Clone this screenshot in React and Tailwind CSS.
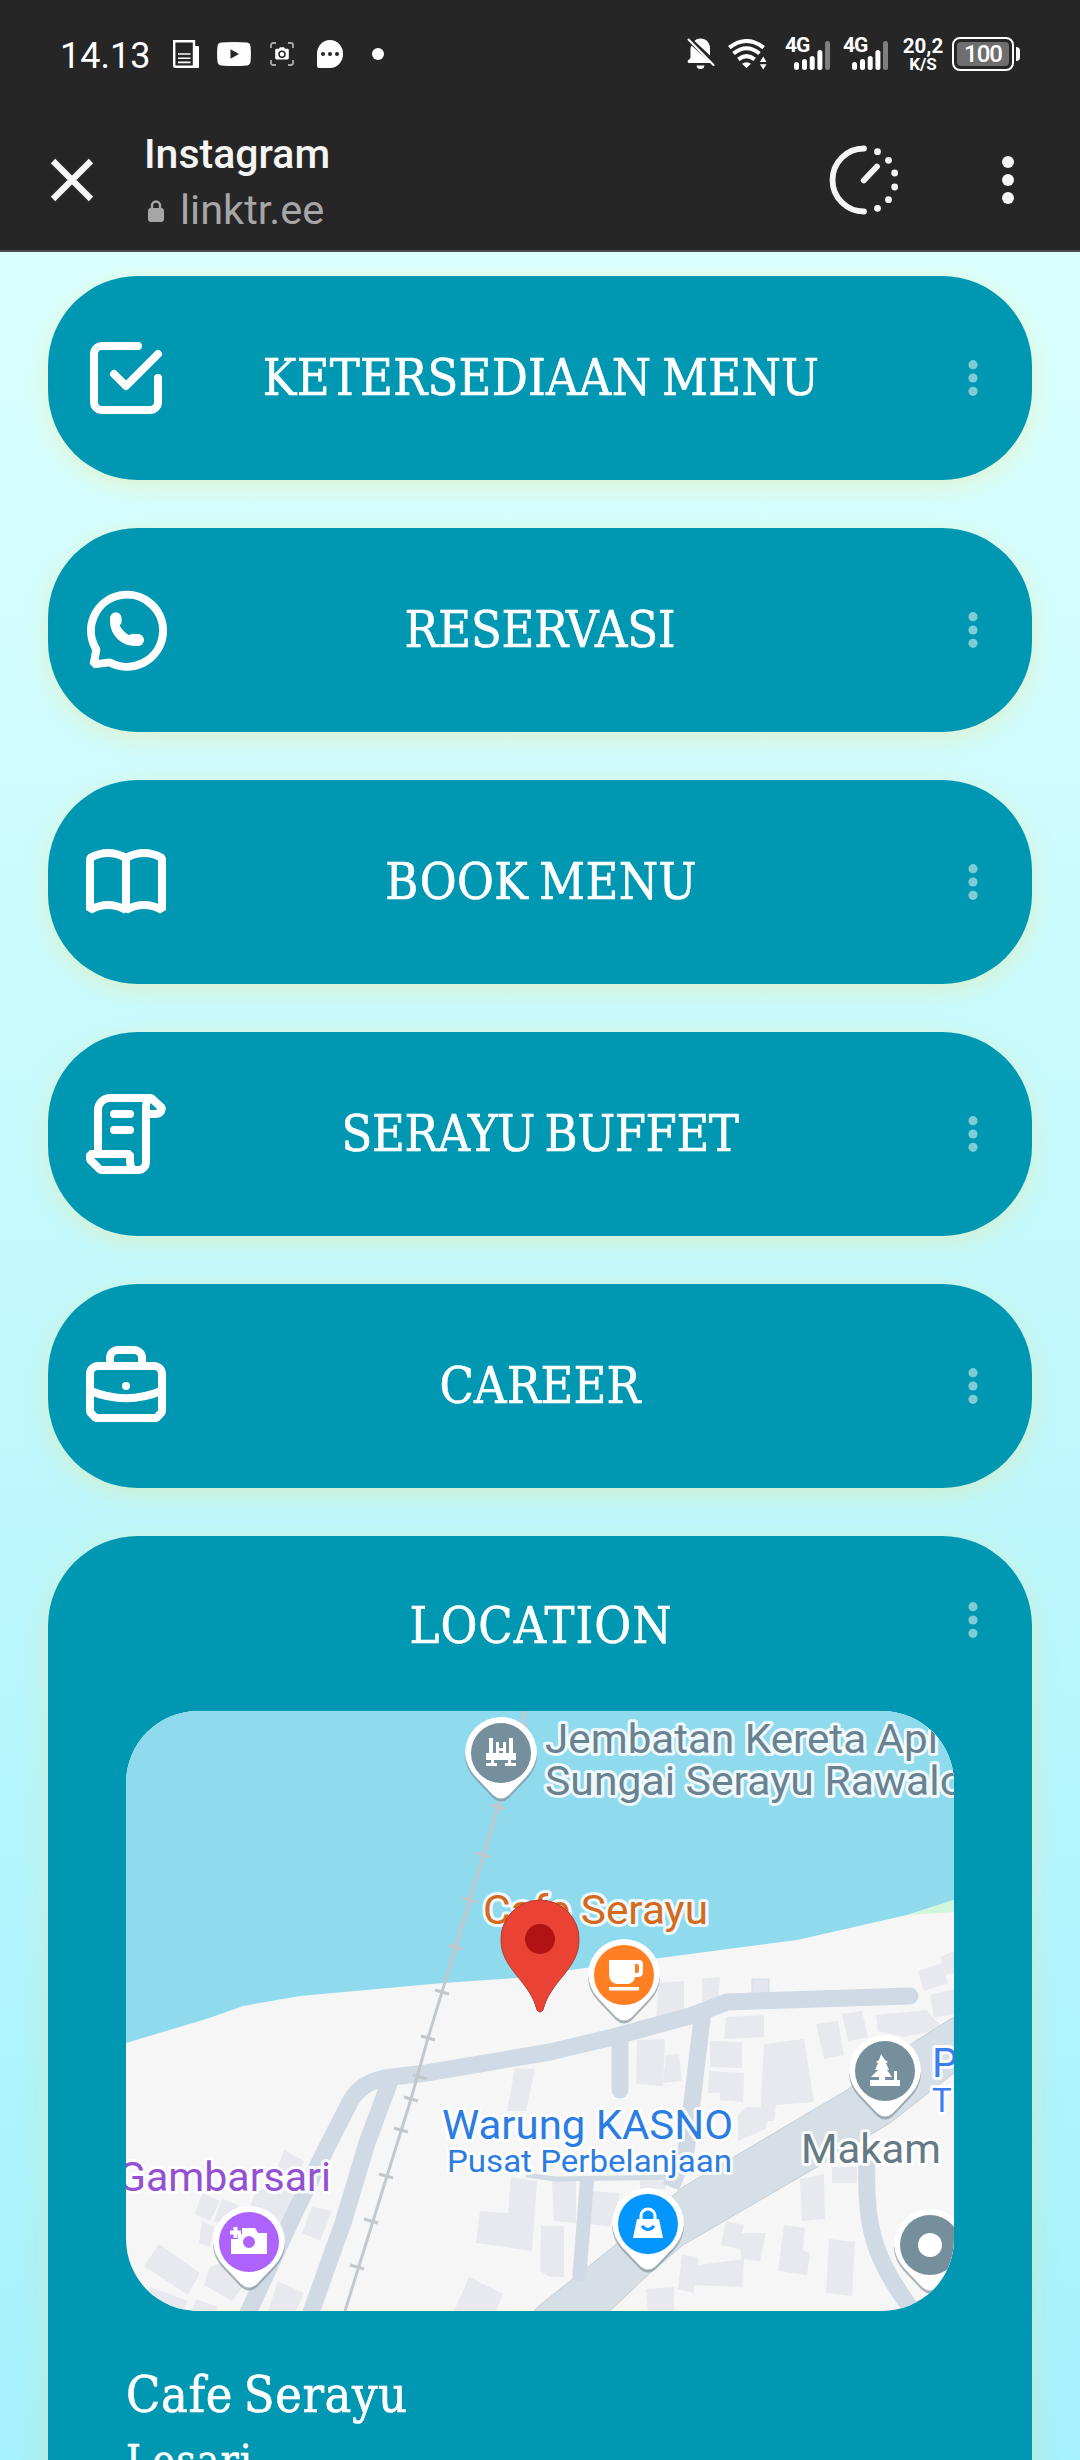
import React from "react";

const slab = "font-['DejaVu_Serif_Condensed','DejaVu_Serif',serif] [font-stretch:condensed] [-webkit-text-stroke:0.6px_#fff] [word-spacing:-4px]";

/* ---------- status bar ---------- */

function Bars() {
  return (
    <svg width="36" height="29" viewBox="0 0 36 29" className="absolute left-[9px] top-[3px]">
      <g fill="#fff">
        <rect x="0" y="21" width="5" height="8" rx="2.5" />
        <rect x="8" y="18" width="5" height="11" rx="2.5" />
        <rect x="15.7" y="15" width="5" height="14" rx="2.5" />
        <rect x="23.4" y="9" width="5" height="20" rx="2.5" />
      </g>
      <rect x="31" y="0" width="5" height="29" rx="2.5" fill="#7f7f7f" />
    </svg>
  );
}

function Signal() {
  return (
    <div className="relative h-[33px] w-[46px] shrink-0">
      <span className="absolute left-0 top-[-1px] text-[21px] font-bold leading-[17px] tracking-[-1px]">4G</span>
      <Bars />
    </div>
  );
}

function StatusBar() {
  return (
    <div className="flex h-[108px] items-center pl-[60px] pr-[60px] text-white">
      <span className="w-[113px] pt-[3px] text-[36px] leading-none">14.13</span>
      <svg width="26" height="28" viewBox="0 0 26 28">
        <path d="M1.2 1.2H21V26.8H2.2a1 1 0 0 1-1-1Z" fill="none" stroke="#fff" strokeWidth="2.4" />
        <path d="M21 6h4a1 1 0 0 1 1 1v20a1 1 0 0 1-1 1h-4Z" fill="#fff" />
        <path d="M5 14h12.500M5 18.200h12.500M5 22.400h12.500" stroke="#fff" strokeWidth="1.6" />
      </svg>
      <svg width="34" height="24" viewBox="0 0 34 24" className="ml-[18px]">
        <path d="M4 .6Q17-.6 30 .6 33.400 1 33.600 5 34.200 12 33.600 19 33.400 23 30 23.400 17 24.600 4 23.400 .6 23 .4 19-.2 12 .4 5 .6 1 4 .6Z" fill="#fff" />
        <path d="M13.500 7.300 22 12l-8.500 4.700Z" fill="#262626" />
      </svg>
      <svg width="24" height="24" viewBox="0 0 24 24" className="ml-[19px]">
        <path d="M1 6V3a2 2 0 0 1 2-2h3M18 1h3a2 2 0 0 1 2 2v3M23 18v3a2 2 0 0 1-2 2h-3M6 23H3a2 2 0 0 1-2-2v-3" fill="none" stroke="#a8a8a8" strokeWidth="1.8" />
        <path d="M6.500 6.800H9l1-1.600h4l1 1.600h2.500a1.300 1.300 0 0 1 1.300 1.300v8a1.300 1.300 0 0 1-1.300 1.300h-11a1.300 1.300 0 0 1-1.300-1.300v-8a1.300 1.300 0 0 1 1.300-1.300Z" fill="#fff" />
        <circle cx="12" cy="12.200" r="3" fill="#fff" stroke="#262626" strokeWidth="1.500" />
      </svg>
      <svg width="26" height="28" viewBox="0 0 26 28" className="ml-[23px]">
        <path d="M13 0a13 14 0 0 1 0 28H2a2 2 0 0 1-2-2V14A13 14 0 0 1 13 0Z" fill="#fff" />
        <g fill="#262626">
          <circle cx="6" cy="14" r="2" />
          <circle cx="13" cy="14" r="2" />
          <circle cx="20" cy="14" r="2" />
        </g>
      </svg>
      <span className="ml-[29px] h-3 w-3 rounded-full bg-white" />
      <div className="ml-auto flex items-center">
        <svg width="28" height="32" viewBox="0 0 28 32">
          <path d="M13.500.5c5.500 0 9.500 4 9.500 10v7L7.500 3C9 1.300 11 .5 13.500.5ZM4.500 7.500 24 25H2a1.500 1.500 0 0 1-1-2.500L3.500 20V11q0-2 1-3.500ZM9.500 27.500h8q-.5 3.500-4 3.500t-4-3.500Z" fill="#fff" />
          <path d="M1.500 1.500 26.500 27" stroke="#fff" strokeWidth="2" strokeLinecap="round" />
        </svg>
        <svg width="39" height="31" viewBox="0 0 39 31" className="ml-[13px]">
          <g fill="none" stroke="#fff" strokeWidth="4">
            <path d="M1.300 8.700Q18.500-4.700 35.700 8.700" />
            <path d="M5.500 14.500Q18.500 4 31.500 14.500" />
            <path d="M10.300 20.300Q18.500 14 26.700 20.300" />
          </g>
          <path d="M14 24.800Q18.500 21.500 23 24.800L18.500 29Z" fill="#fff" />
          <path d="M35.200 17.500 38.500 23h-6.600ZM35.200 30.500l3.300-5.200h-6.600Z" fill="#fff" />
        </svg>
        <div className="ml-[18px] flex gap-3">
          <Signal />
          <Signal />
        </div>
        <div className="ml-[14px] flex h-[34px] w-[40px] flex-col items-center font-bold">
          <span className="text-[20.500px] leading-[18px]">20,2</span>
          <span className="text-[17px] leading-[18px]">K/S</span>
        </div>
        <div className="ml-[9px] flex h-[34px] w-[62px] rounded-[8px] border-[2.500px] border-white p-[3px]">
          <div className="flex flex-1 items-center justify-center rounded-[4px] bg-[#6e6e6e] text-[24px] font-medium leading-none tracking-[-1px]">
            100
          </div>
        </div>
        <span className="ml-[2px] h-[14px] w-[4px] rounded-r-[4px] bg-white" />
      </div>
    </div>
  );
}

/* ---------- browser bar ---------- */

const loadingDots = [
  [48.5, 11.7],
  [59.5, 20.3],
  [65.7, 33],
  [65.7, 47],
  [59.5, 59.7],
  [48.5, 68.3],
];

function BrowserBar() {
  return (
    <div className="flex h-[144px] items-center border-b-2 border-[#474c4c] pl-[50px] pt-[2px]">
      <svg width="44" height="44" viewBox="0 0 44 44">
        <path d="M3 3 41 41M41 3 3 41" stroke="#f5f5f5" strokeWidth="6.200" />
      </svg>
      <div className="ml-[50px] flex flex-col pt-[4px]">
        <span className="text-[41px] font-medium leading-[56px] text-[#f5f5f5]">Instagram</span>
        <div className="flex items-center text-[#a6a6a6]">
          <svg width="16" height="22" viewBox="0 0 16 22" className="mt-[1px] ml-[4px]">
            <rect x="0" y="8" width="16" height="14" rx="3" fill="#a6a6a6" />
            <path d="M4 10V5.500a4 4 0 0 1 8 0V10" fill="none" stroke="#a6a6a6" strokeWidth="2.400" />
          </svg>
          <span className="ml-[16px] text-[41.500px] leading-[56px]">linktr.ee</span>
        </div>
      </div>
      <svg width="80" height="80" viewBox="0 0 80 80" className="ml-auto mr-[93px]">
        <g fill="none" stroke="#f5f5f5" strokeWidth="5.800" strokeLinecap="round">
          <path d="M35 8.500a31.500 31.500 0 0 0 0 63" />
          <path d="M34.700 40.500 48 26.500" />
        </g>
        {loadingDots.map(([x, y]) => (
          <circle key={x + "-" + y} cx={x} cy={y} r="3.400" fill="#f5f5f5" />
        ))}
      </svg>
      <svg width="12" height="50" viewBox="0 0 12 50" className="mr-[66px]" fill="#f5f5f5">
        <circle cx="6" cy="7" r="6" />
        <circle cx="6" cy="25" r="6" />
        <circle cx="6" cy="43" r="6" />
      </svg>
    </div>
  );
}

/* ---------- link icons ---------- */

function Icon({ children }) {
  return (
    <svg width="96" height="96" viewBox="0 0 24 24" fill="none" stroke="#fff" strokeWidth="2">
      {children}
    </svg>
  );
}

const CheckIcon = () => (
  <Icon>
    <g strokeLinecap="round" strokeLinejoin="round">
      <path d="M15 4H6a2 2 0 0 0-2 2v12a2 2 0 0 0 2 2h12a2 2 0 0 0 2-2v-6" />
      <path d="m9 11 3 3 8-8" />
    </g>
  </Icon>
);

const ChatIcon = () => (
  <Icon>
    <path d="M4.600 16.900A9 9 0 1 1 8 20.100L3.900 20.600Z" strokeLinejoin="bevel" />
    <path
      d="M8 9a1.450 1.450 0 0 1 2.900 0v1c0 .3-.2.6-.5.8.5 1 1.300 1.900 2.400 2.500.3-.2.600-.3 1-.3h1.200a1.500 1.500 0 0 1 0 3h-.8A6.200 6.200 0 0 1 8 10Z"
      fill="#fff"
      stroke="none"
    />
  </Icon>
);

const BookIcon = () => (
  <Icon>
    <path d="M3 6Q7.500 3.500 12 6V19Q7.500 16.500 3 19ZM12 6Q16.500 3.500 21 6V19Q16.500 16.500 12 19Z" strokeLinejoin="bevel" />
  </Icon>
);

const ScrollIcon = () => (
  <Icon>
    <path d="M5 17V6a3 3 0 0 1 3-3h10.300L21 5.500Q20.800 7 19.200 7H17" strokeLinejoin="bevel" />
    <path d="M18.500 3A2 2 0 0 0 17 5V19a2 2 0 0 1-2 2H5.600L3 18.400V17H13v1.500c0 1.300.3 2.100 1 2.500" strokeLinejoin="bevel" />
    <path d="M9 7h4M9 11h4" strokeLinecap="round" />
  </Icon>
);

const BriefcaseIcon = () => (
  <Icon>
    <path d="M8 7V5a2 2 0 0 1 2-2h4a2 2 0 0 1 2 2v2" />
    <path d="M3 9a2 2 0 0 1 2-2h14a2 2 0 0 1 2 2v9.500L19.600 20H4.400L3 18.500Z" strokeLinejoin="bevel" />
    <path d="M3 13.200Q12 16.900 21 13.200" />
    <circle cx="12" cy="12" r="1" fill="#fff" stroke="none" />
  </Icon>
);

function MoreDots() {
  return (
    <svg width="10" height="40" viewBox="0 0 10 40" fill="#7fcbd8">
      <circle cx="5" cy="6.700" r="4.600" />
      <circle cx="5" cy="20" r="4.600" />
      <circle cx="5" cy="33.300" r="4.600" />
    </svg>
  );
}

const links = [
  { label: "KETERSEDIAAN MENU", icon: CheckIcon, spacing: "tracking-[0.3px] pl-[2px]" },
  { label: "RESERVASI", icon: ChatIcon, spacing: "tracking-[-0.2px]" },
  { label: "BOOK MENU", icon: BookIcon, spacing: "tracking-[0.4px] pl-[2px]" },
  { label: "SERAYU BUFFET", icon: ScrollIcon, spacing: "tracking-[-0.4px]" },
  { label: "CAREER", icon: BriefcaseIcon, spacing: "tracking-[0.1px]" },
];

const cardShadow = "shadow-[0_6px_26px_rgba(255,222,89,0.3)]";

function LinkCard({ label, icon: Glyph, spacing }) {
  return (
    <a className={`grid h-[204px] shrink-0 grid-cols-[96px_1fr_96px] items-center rounded-[90px] bg-[#0097b2] px-[30px] ${cardShadow}`}>
      <Glyph />
      <span className={`${slab} ${spacing} whitespace-nowrap text-center text-[50px] leading-[60px] text-white`}>{label}</span>
      <span className="flex justify-end pr-[24.500px]">
        <MoreDots />
      </span>
    </a>
  );
}

/* ---------- map ---------- */

const buildings = [
  "533,272 558,270 558,305 530,310", "576,268 594,266 592,292 576,290", "792,260 816,252 822,272 798,280",
  "814,246 828,240 828,262 820,264", "804,284 828,278 828,304 808,306",
  "600,306 638,304 638,326 598,328", "584,330 616,331 616,357 584,356", "583,360 618,362 617,391 594,389 594,382 582,382",
  "638,333 678,328 688,391 650,394 648,410 634,410", "690,313 712,310 718,344 698,348", "716,303 736,300 742,326 722,330",
  "750,304 800,299 818,318 778,326 752,320", "620,396 642,396 640,418 612,430 612,404",
  "511,329 539,328 537,375 510,373", "540,344 553,343 556,370 537,372",
  "389,357 409,358 400,400 381,400", "385,466 411,470 406,540 379,536 350,532 354,500 382,502",
  "343,566 377,583 370,600 328,600", "426,470 450,470 450,512 428,510", "462,480 494,482 484,516 458,512",
  "415,515 438,515 438,566 424,566 414,560", "514,464 540,468 540,478 514,478",
  "600,510 618,514 616,522 640,522 634,550 616,548 614,538 595,534", "556,544 572,546 572,554 618,548 616,576 568,574 568,582 552,578",
  "520,578 548,576 548,600 522,600", "658,514 679,517 677,539 684,542 681,564 652,560", "703,528 729,531 726,585 700,582",
  "674,468 698,463 699,508 676,510", "706,456 731,456 731,472 706,472",
  "158,439 178,450 172,468 150,460", "76,482 94,490 84,510 69,503", "96,488 112,494 106,520 88,510",
  "130,480 166,472 170,500 150,520 120,506", "186,496 206,500 194,530 176,522",
  "33,533 74,562 62,584 18,555", "24,576 62,590 56,600 42,600 22,590", "84,556 100,550 118,574 106,590 78,574",
  "152,570 178,582 170,600 142,600", "70,588 92,596 90,600 66,600", "76,510 88,516 84,536 73,532",
];

const ticks = [
  [395, 14], [372, 96], [357, 144], [344, 189], [330, 236], [316, 281], [302, 327], [294, 366], [285, 388], [275, 419], [260, 465], [245, 510], [231, 556],
];

function Pin({ x, y, color, children }) {
  return (
    <g transform={`translate(${x} ${y})`}>
      <path d="M-36 2A36 36 0 1 1 36 2Q35 14 26 24L8 43Q0 50-8 43L-26 24Q-35 14-36 2Z" fill="#7e8f98" opacity=".65" transform="translate(0 2)" />
      <path d="M-36 0A36 36 0 1 1 36 0Q35 13 26 23L8 42Q0 49-8 42L-26 23Q-35 13-36 0Z" fill="#fff" />
      <circle r="30" fill={color} />
      <g fill="#fff">{children}</g>
    </g>
  );
}

function Label({ x, y, size = 41, color, length, children }) {
  return (
    <text
      x={x}
      y={y}
      fontSize={size}
      fill={color}
      stroke="#fff"
      strokeOpacity=".85"
      strokeWidth="6"
      strokeLinejoin="round"
      paintOrder="stroke"
      textLength={length}
      lengthAdjust="spacingAndGlyphs"
    >
      {children}
    </text>
  );
}

function MapView() {
  return (
    <svg viewBox="0 0 828 600" width="828" height="600" className="block rounded-[72px] font-[Roboto,sans-serif]">
      <rect width="828" height="600" fill="#f6f6f7" />
      <g fill="#e8e9ee">
        {buildings.map((points) => (
          <polygon key={points} points={points} />
        ))}
      </g>
      <rect x="626" y="268" width="17" height="18" fill="#e3e7ed" stroke="#d2dbe3" />
      <path d="M414 594 487 536 557 476 721 379 791 329 828 306V362L764 412 691 456 557 534 524 562 484 600H408Z" fill="#d7dfe6" stroke="#c5cfd5" strokeWidth="1" />
      <g fill="none" stroke="#cfdae4" strokeWidth="17" strokeLinejoin="round">
        <path d="M121 604 170 499 200 438 224 391Q236 369 266 366L300 362 424 341 487 326 564 305 601 291 784 285" strokeLinecap="round" />
        <path d="M184 604 217 512 241 432 264 370" />
        <path d="M577 299 566 392 560 440 545 476" />
        <path d="M494 329V379" strokeLinecap="round" />
        <path d="M461 469 453 570" strokeWidth="14" />
        <path d="M400 464 430 468 554 466" strokeWidth="5" />
        <path d="M741 450Q739 500 749 532T790 604" />
      </g>
      <path d="M0 0H828V189L781 204 671 229 534 247 444 259 391 267 317 272 174 285 117 295Q98 302 77 309L0 332Z" fill="#90daee" />
      <path d="M781 204 828 189V201Z" fill="#d0f6dc" />
      <path d="M399 0 372 96 316 281 302 327 285 388 219 600" fill="none" stroke="#c2c8cc" strokeWidth="3" />
      <g stroke="#c2c8cc" strokeWidth="3">
        {ticks.map(([x, y]) => (
          <path key={y} d={`M${x - 7} ${y - 2}l14 4`} />
        ))}
      </g>

      <Label x="419" y="42" color="#6a8290" length="393">Jembatan Kereta Api</Label>
      <Label x="419" y="84" color="#6a8290" length="419">Sungai Serayu Rawalo</Label>
      <Label x="357" y="213" color="#d5691c" length="225">Cafe Serayu</Label>
      <Label x="316" y="428" color="#2b7de3" length="291">Warung KASNO</Label>
      <Label x="321" y="461" size={32} color="#2b7de3" length="285">Pusat Perbelanjaan</Label>
      <Label x="-8" y="480" color="#9350d2" length="213">Gambarsari</Label>
      <Label x="675" y="452" color="#667a85" length="140">Makam</Label>
      <Label x="806" y="366" color="#3b7cf0">P</Label>
      <Label x="806" y="401" size={33} color="#3b7cf0">T</Label>

      <Pin x="375" y="42" color="#768f9c">
        <path d="M-15 0H15V7H10V10H15V13H4V10H7V7H-7V10H-4V13H-15V10H-10V7H-15ZM-12-15H-8V0H-12ZM8-15H12V0H8ZM-5-11H-2V-5H2V-11H5V0H2V-2H-2V0H-5Z" />
      </Pin>
      <Pin x="498" y="264" color="#ff7f22">
        <path d="M-15-15H15Q19-15 19-11V-3Q19 2 14 2H11Q10 8 4 9H-7Q-15 8-15-1ZM11-11V-2H13Q15-2 15-4V-9Q15-11 13-11Z" fillRule="evenodd" />
        <rect x="-15" y="12" width="30" height="3.500" />
      </Pin>
      <Pin x="123" y="531" color="#ae63ff">
        <path d="M-18-3H-11V-8H-7V-14H6L9-9H18V12H-18ZM-6 0a6 6 0 1 0 12 0 6 6 0 1 0-12 0Z" fillRule="evenodd" />
        <path d="M-15.500-15h4v3.500h3.500v4h-3.500V-4h-4v-3.500H-19v-4h3.500Z" />
      </Pin>
      <Pin x="522" y="513" color="#0396ff">
        <path d="M-11-5H11L15 14H-15Z" />
        <path d="M-7-5V-8a7 7 0 0 1 14 0v3" fill="none" stroke="#fff" strokeWidth="3" />
        <path d="M-6 2Q0 9 6 2" fill="none" stroke="#0396ff" strokeWidth="3" />
      </Pin>
      <Pin x="759" y="360" color="#768f9c">
        <path d="M-4-17 0-11 3-9 1-8 4-1H2L7 6H0V9H9V0H12V9H15V15H-15V9H-6V6H-14L-7-1H-10L-7-8-9-9-6-11Z" />
      </Pin>
      <Pin x="804" y="534" color="#768f9c">
        <circle r="12" />
      </Pin>
      <path d="M414 189A39 39 0 0 1 453 229C453 258 424 270 417 299Q414 303 411 299C404 270 375 258 375 229A39 39 0 0 1 414 189Z" fill="#ea4335" stroke="#b3382c" strokeWidth="1" />
      <circle cx="414" cy="228" r="15" fill="#b11313" />
    </svg>
  );
}

function LocationCard() {
  return (
    <section className={`flex h-[1100px] shrink-0 flex-col rounded-[90px] bg-[#0097b2] px-[78px] text-white ${cardShadow}`}>
      <header className="relative flex h-[175px] items-center justify-center pt-[5px] pl-[2px]">
        <h2 className={`${slab} text-[50px] leading-[60px] tracking-[1px]`}>LOCATION</h2>
        <span className="absolute right-[-23.500px] top-[64px]">
          <MoreDots />
        </span>
      </header>
      <MapView />
      <div className={`${slab} pt-[54px]`}>
        <p className="text-[50px] leading-[60px] tracking-[0.600px]">Cafe Serayu</p>
        <p className="pt-[6px] text-[42px] leading-[60px] tracking-[1.200px]">Losari</p>
      </div>
    </section>
  );
}

export default function App() {
  return (
    <div className="flex h-[2460px] w-[1080px] flex-col overflow-hidden font-[Roboto,sans-serif]">
      <div className="h-[252px] shrink-0 bg-[#262626]">
        <StatusBar />
        <BrowserBar />
      </div>
      <main className="flex min-h-0 flex-1 flex-col gap-12 overflow-hidden bg-gradient-to-b from-[#dbffff] to-[#a5f1fc] px-12 pt-6">
        {links.map((link) => (
          <LinkCard key={link.label} {...link} />
        ))}
        <LocationCard />
      </main>
    </div>
  );
}
